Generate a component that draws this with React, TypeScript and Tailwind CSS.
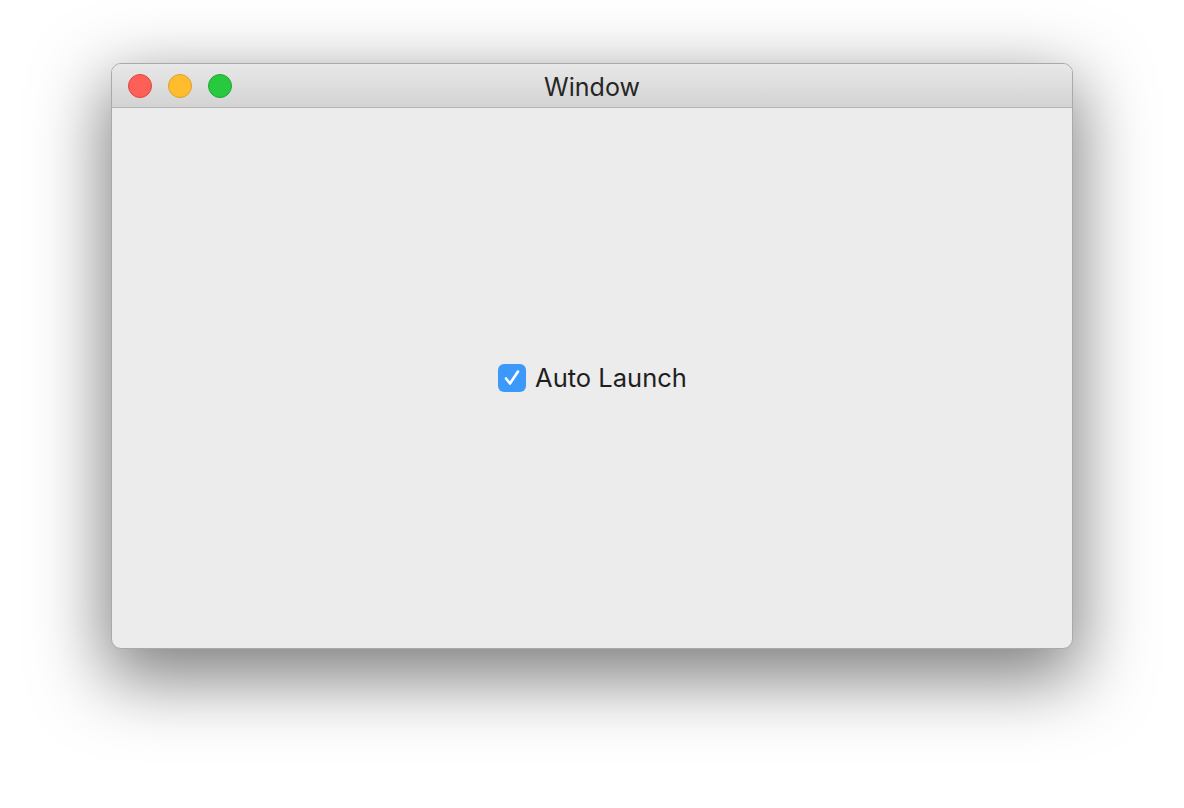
export default function App() {
  return (
    <div className="w-[1184px] h-[808px] bg-white flex justify-center pt-[63px]" style={{ fontFamily: "Inter, 'Helvetica Neue', Arial, sans-serif" }}>
      <div className="w-[962px] h-[586px] rounded-[10px] overflow-hidden flex flex-col bg-[#ececec] border border-[#a9a9a9] shadow-[0_24px_70px_6px_rgba(0,0,0,0.5)]">
        <div className="h-[44px] shrink-0 relative flex items-center bg-gradient-to-b from-[#e8e8e8] to-[#d3d3d3] border-b border-[#b6b6b6]">
          <div className="flex items-center gap-[16px] pl-[16px] pt-[1px]">
            <span className="w-[24px] h-[24px] rounded-full bg-[#fe5f57] border border-[#e0443e]" />
            <span className="w-[24px] h-[24px] rounded-full bg-[#febc2e] border border-[#dea123]" />
            <span className="w-[24px] h-[24px] rounded-full bg-[#28c840] border border-[#1aab29]" />
          </div>
          <div className="absolute inset-0 flex items-center justify-center pt-[5px] text-[25px] text-[#262626] pointer-events-none">Window</div>
        </div>
        <div className="flex-1 flex items-center justify-center">
          <label className="flex items-center gap-[9px] pl-[1px]">
            <span className="w-[28px] h-[28px] rounded-[6px] bg-[#3b99fc] flex items-center justify-center">
              <svg width="22" height="22" viewBox="0 0 22 22" fill="none">
                <path d="M5 11.5 L9 16.5 L17 4.5" stroke="white" strokeWidth="2.6" strokeLinecap="round" strokeLinejoin="round" />
              </svg>
            </span>
            <span className="text-[25.5px] text-[#1f1f1f]">Auto Launch</span>
          </label>
        </div>
      </div>
    </div>
  );
}
